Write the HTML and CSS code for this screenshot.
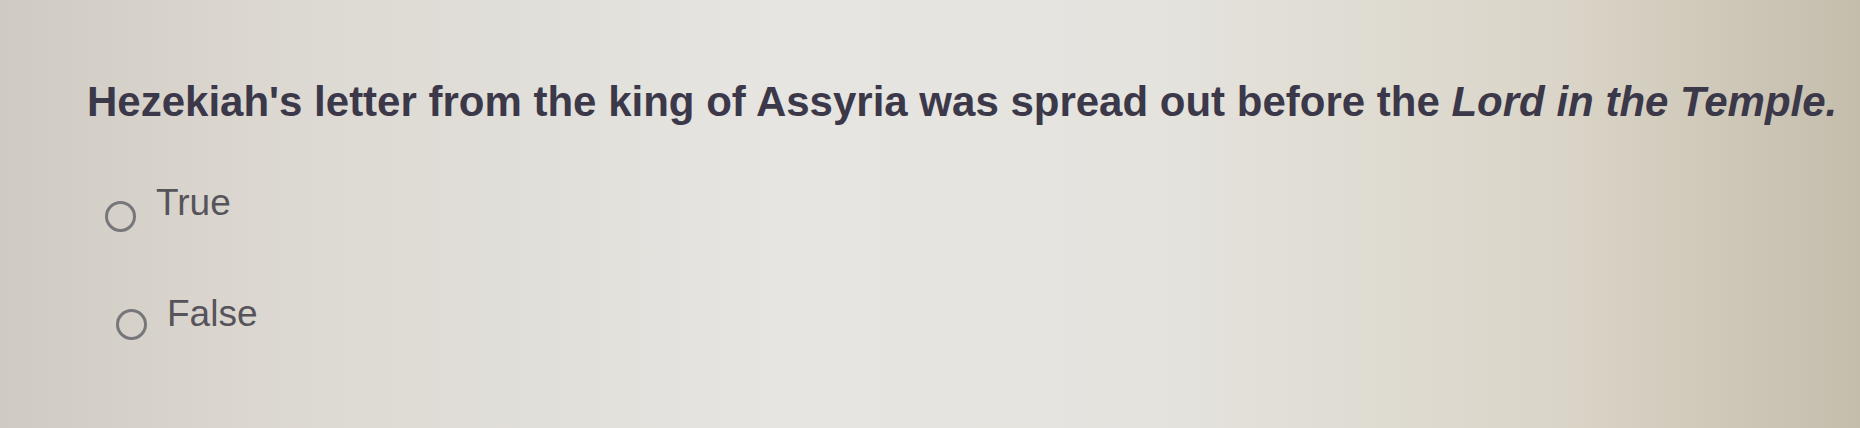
FILE: index.html
```html
<html>
  <head>
    <link rel="stylesheet" href="styles.css">
    <title>Question</title>
  </head>
  <body>
    <div class="page">
      <p class="question">Hezekiah's letter from the king of Assyria was spread out before the <i>Lord in the Temple.</i></p>
      <div class="options">
        <label class="option"><span class="radio"></span>True</label>
        <label class="option second"><span class="radio"></span>False</label>
      </div>
    </div>
  </body>
</html>
```

FILE: styles.css
```css
html, body {margin:0; padding:0;}
body {font-family:"Liberation Sans", Arial, sans-serif; width:1860px; height:428px; overflow:hidden;
  background:linear-gradient(90deg, #cfcbc3 0%, #dcd8d1 14%, #e6e5e1 42%, #e5e3de 62%, #dad5c8 84%, #c5bdac 100%);}
.page {padding:78px 0 0 87px;}
.question {margin:0; font-size:42px; font-weight:bold; color:#3b3849; white-space:nowrap;}
.options {display:flex; flex-direction:column; gap:61px; margin-top:56px; margin-left:18px;}
.option {display:flex; align-items:flex-start; gap:20px; font-size:37px; line-height:42px; color:#56545a;}
.second {margin-left:11px;}
.radio {width:25px; height:25px; border:3px solid #77767a; border-radius:50%; margin-top:19px;}
.second .radio {margin-top:16px;}
```
